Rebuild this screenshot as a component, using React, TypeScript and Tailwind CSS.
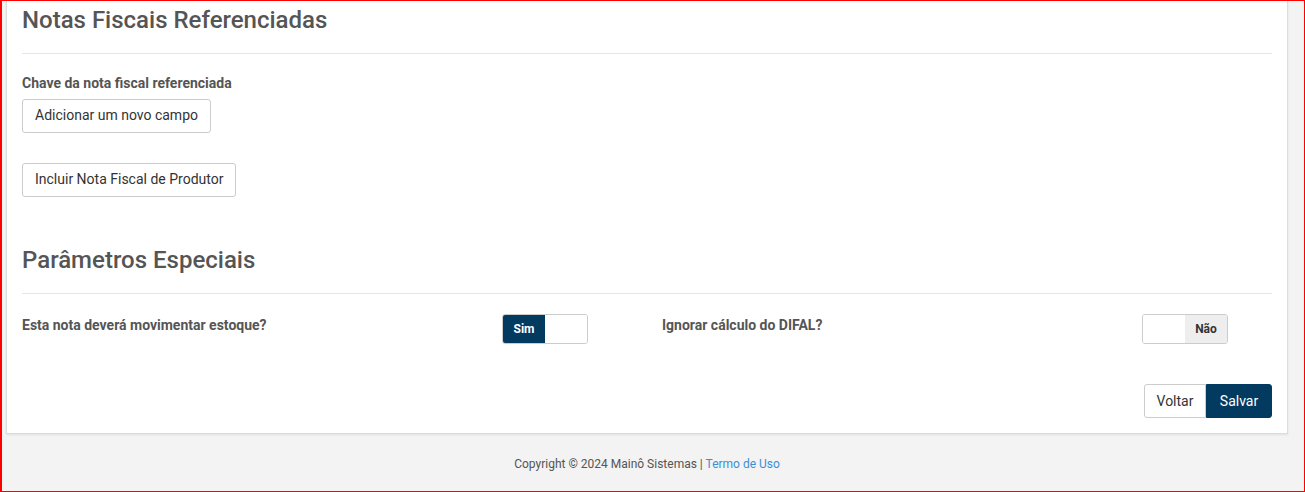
export default function App() {
  return (
    <div
      className="h-[492px] w-[1305px] overflow-hidden border-t border-r border-b border-l-2 border-[#ff0000] bg-[#f2f3f2] text-[#555555]"
      style={{ fontFamily: "Roboto, 'Liberation Sans', sans-serif" }}
    >
      <div className="ml-[4px] mr-[16px] h-[433px] border-x border-b border-[#dcdcdc] bg-white px-[15px] pt-[4px] shadow-[0_1px_2px_rgba(0,0,0,0.08)]">
        <h2 className="text-[24px] font-medium leading-[30px]">Notas Fiscais Referenciadas</h2>
        <hr className="mt-[18px] border-t border-[#e5e5e5]" />
        <div className="mt-[22px] text-[14px] font-bold leading-[14px]">Chave da nota fiscal referenciada</div>
        <button className="mt-[9px] block h-[34px] rounded-[3px] border border-[#cccccc] bg-white px-[12px] pb-[1px] text-[14px] text-[#333333]">
          Adicionar um novo campo
        </button>
        <button className="mt-[30px] block h-[34px] rounded-[3px] border border-[#cccccc] bg-white px-[12px] pb-[1px] text-[14px] text-[#333333]">
          Incluir Nota Fiscal de Produtor
        </button>
        <h2 className="mt-[48px] text-[24px] font-medium leading-[30px]">Parâmetros Especiais</h2>
        <hr className="mt-[18px] border-t border-[#e5e5e5]" />
        <div className="mt-[20px] grid grid-cols-2 gap-[30px]">
          <div className="grid grid-cols-[480px_1fr]">
            <div className="pt-[3px] text-[14px] font-bold leading-[16px]">Esta nota deverá movimentar estoque?</div>
            <div className="flex h-[30px] w-[86px] overflow-hidden rounded-[3px] border border-[#cccccc]">
              <div className="flex w-[43px] items-center justify-center bg-[#033a5f] text-[12px] font-bold text-white">Sim</div>
              <div className="w-[43px] bg-white" />
            </div>
          </div>
          <div className="grid grid-cols-[480px_1fr]">
            <div className="pt-[3px] text-[14px] font-bold leading-[16px]">Ignorar cálculo do DIFAL?</div>
            <div className="flex h-[30px] w-[86px] overflow-hidden rounded-[3px] border border-[#cccccc]">
              <div className="w-[43px] bg-white" />
              <div className="flex w-[43px] items-center justify-center bg-[#eeeeee] text-[12px] font-bold text-[#333333]">Não</div>
            </div>
          </div>
        </div>
        <div className="mt-[40px] flex justify-end">
          <button className="h-[34px] w-[62px] rounded-l-[3px] border border-[#cccccc] bg-white text-[14px] text-[#333333]">Voltar</button>
          <button className="h-[34px] w-[66px] rounded-r-[3px] border border-[#033a5f] bg-[#033a5f] text-[14px] text-white">Salvar</button>
        </div>
      </div>
      <div className="ml-[4px] mr-[16px] flex h-[57px] items-center justify-center pt-[2px] text-[12px] text-[#555555]">
        <span>
          Copyright © 2024 Mainô Sistemas | <a className="text-[#3a8fd9]">Termo de Uso</a>
        </span>
      </div>
    </div>
  );
}
